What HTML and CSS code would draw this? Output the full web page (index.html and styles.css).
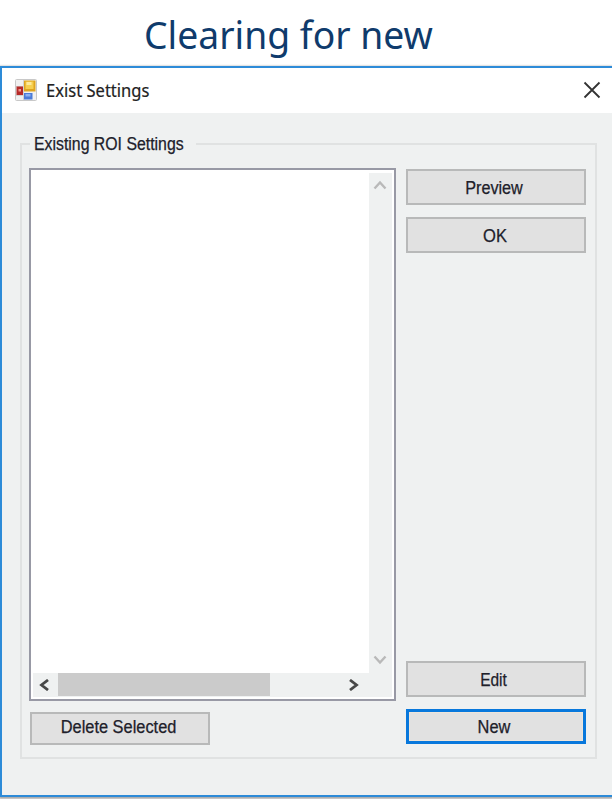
FILE: index.html
```html
<!DOCTYPE html>
<html lang="en">
<head>
<meta charset="utf-8">
<title>Exist Settings</title>
<link rel="stylesheet" href="styles.css">
</head>
<body>
<h1 class="heading"><span class="fit fit-heading">Clearing for new</span></h1>
<main class="window">
  <header class="titlebar">
    <svg class="app-icon" width="22" height="22" viewBox="0 0 22 22">
      <rect x=".5" y=".5" width="21" height="21" rx="1" fill="#f0f0f0" stroke="#c8c8c8"/>
      <path d="M8.5 1v20M1 7.5h7M1 16.5h7" stroke="#d2d2d2"/>
      <rect x="1.5" y="7.5" width="6.5" height="8.5" fill="#b62a28"/>
      <rect x="3.5" y="10" width="2.5" height="2.5" fill="#f0958c"/>
      <rect x="9" y="1.5" width="11.5" height="11" fill="#dfa520"/>
      <rect x="10.5" y="2.5" width="8" height="7.5" fill="#f6cf50"/>
      <rect x="11.5" y="3" width="5" height="3" fill="#fdea9a"/>
      <rect x="9" y="14" width="8.5" height="6.5" fill="#4a7bd8"/>
      <rect x="10.5" y="15" width="5" height="2.5" fill="#8bb0f2"/>
    </svg>
    <span class="caption"><span class="fit fit-caption">Exist Settings</span></span>
    <svg class="close" width="18" height="18" viewBox="0 0 18 18"><path d="M1.5 1.5l15 15M16.5 1.5l-15 15" fill="none" stroke="#333" stroke-width="1.8"/></svg>
  </header>
  <fieldset class="group">
    <legend class="legend"><span class="fit fit-legend">Existing ROI Settings</span></legend>
    <div class="columns">
      <div class="left">
        <div class="listbox">
          <div class="items"></div>
          <div class="vscroll">
            <svg width="14" height="10" viewBox="0 0 14 10"><path d="M1.5 8.5L7 2.5l5.5 6" fill="none" stroke="#b9b9b9" stroke-width="2.4"/></svg>
            <svg width="14" height="10" viewBox="0 0 14 10"><path d="M1.5 1.5L7 7.5l5.5-6" fill="none" stroke="#b9b9b9" stroke-width="2.4"/></svg>
          </div>
          <div class="hscroll">
            <svg class="arrow-left" width="10" height="12" viewBox="0 0 10 12"><path d="M9 1L2.5 6 9 11" fill="none" stroke="#484848" stroke-width="2.8"/></svg>
            <div class="thumb"></div>
            <svg class="arrow-right" width="10" height="12" viewBox="0 0 10 12"><path d="M1 1l6.5 5L1 11" fill="none" stroke="#484848" stroke-width="2.8"/></svg>
          </div>
        </div>
        <button class="button delete"><span class="fit fit-delete">Delete Selected</span></button>
      </div>
      <div class="right">
        <button class="button"><span class="fit fit-preview">Preview</span></button>
        <button class="button"><span class="fit fit-ok">OK</span></button>
        <button class="button edit"><span class="fit fit-edit">Edit</span></button>
        <button class="button default"><span class="fit fit-new">New</span></button>
      </div>
    </div>
  </fieldset>
</main>
</body>
</html>
```
FILE: styles.css
```css
* { box-sizing: border-box; }
body {
  margin: 0;
  width: 612px;
  height: 799px;
  overflow: hidden;
  background: #fff;
  color: #20202a;
  font-family: "Liberation Sans", Arial, sans-serif;
  font-size: 18px;
}
.fit { display: inline-block; white-space: nowrap; transform-origin: 50% 50%; }
.heading {
  margin: 0;
  height: 66px;
  padding: 7px 0 0 144px;
  font: 400 39px/54px "Noto Sans", sans-serif;
  color: #0f3b6c;
}
.fit-heading { transform: scaleX(.956); transform-origin: 0 50%; }
.window {
  height: 731px;
  border: 2px solid #2d8bd8;
  border-right: 0;
  background: #eff1f1;
  box-shadow: 0 1px 2px 1px #aaa;
}
.titlebar {
  display: flex;
  align-items: center;
  height: 45px;
  padding: 0 11px 2px 13px;
  background: #fff;
}
.caption {
  flex: 1;
  margin-left: 9px;
  font: 18.5px/24px "Noto Sans", sans-serif;
  color: #222;
  -webkit-text-stroke: .2px #222;
}
.fit-caption { transform: scaleX(.895); transform-origin: 0 50%; }
.group {
  margin: 20px 15px 0 18px;
  height: 626px;
  padding: 0;
  border: 2px solid #e0e2e2;
}
.legend {
  height: 22px;
  width: 166px;
  margin-left: 8px;
  padding: 0 0 0 4px;
  line-height: 22px;
}
.legend, .button { -webkit-text-stroke: .25px #20202a; }
.fit-legend { transform: scaleX(.88); transform-origin: 0 50%; }
.columns { display: flex; gap: 10px; margin: 13px 0 0 7px; }
.left { width: 367px; }
.listbox {
  display: grid;
  grid-template: 503px 24px / 338px 23px;
  height: 533px;
  border: 2px solid #9899a5;
  background: #fff;
}
.vscroll {
  display: flex;
  flex-direction: column;
  justify-content: space-between;
  align-items: center;
  margin-top: 3px;
  padding: 7px 1px 8px 0;
  background: #eff1f1;
}
.hscroll {
  grid-column: 1 / 3;
  display: flex;
  align-items: center;
  margin-left: 2px;
  background: #eff1f1;
}
.arrow-left { margin-left: 6px; }
.thumb { width: 212px; height: 23px; margin: 0 0 1px 9px; background: #cbcbcb; }
.arrow-right { margin-left: 79px; }
.button {
  display: flex;
  align-items: center;
  justify-content: center;
  width: 180px;
  height: 36px;
  padding: 0;
  border: 2px solid #b8b9b9;
  background: #e1e1e1;
  color: inherit;
  font: inherit;
}
.delete { height: 33px; margin: 11px 0 0 1px; }
.right { display: flex; flex-direction: column; gap: 12px; height: 576px; padding-top: 1px; }
.edit { margin-top: auto; }
.default { height: 35px; border: 3px solid #0878dc; box-shadow: inset 0 0 0 1px #eee5da; }
.fit-delete { transform: translate(-1px, -1px) scaleX(.91); }
.fit-preview { transform: translate(-2px, 1px) scaleX(.9); }
.fit-ok { transform: translate(-1px, 1px) scaleX(.92); }
.fit-edit { transform: translate(-2px, 1px) scaleX(.86); }
.fit-new { transform: translate(-2px, 1px) scaleX(.91); }
```
